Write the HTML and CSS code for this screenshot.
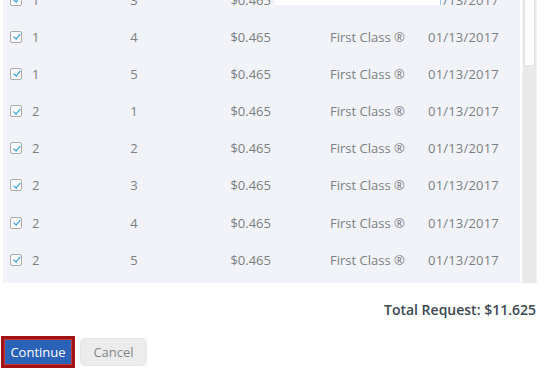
FILE: index.html
```html
<!DOCTYPE html>
<html>
<head>
<meta charset="utf-8">
<link rel="stylesheet" href="styles.css">
</head>
<body>
<div class="page">
  <div class="table-wrap">
    <div class="table">
      <div class="rows">
        <div class="row"><span class="cb"></span><span class="c1">1</span><span class="c2">3</span><span class="c3">$0.465</span><span class="c4">First Class ®</span><span class="c5">01/13/2017</span></div>
        <div class="row"><span class="cb"></span><span class="c1">1</span><span class="c2">4</span><span class="c3">$0.465</span><span class="c4">First Class ®</span><span class="c5">01/13/2017</span></div>
        <div class="row"><span class="cb"></span><span class="c1">1</span><span class="c2">5</span><span class="c3">$0.465</span><span class="c4">First Class ®</span><span class="c5">01/13/2017</span></div>
        <div class="row"><span class="cb"></span><span class="c1">2</span><span class="c2">1</span><span class="c3">$0.465</span><span class="c4">First Class ®</span><span class="c5">01/13/2017</span></div>
        <div class="row"><span class="cb"></span><span class="c1">2</span><span class="c2">2</span><span class="c3">$0.465</span><span class="c4">First Class ®</span><span class="c5">01/13/2017</span></div>
        <div class="row"><span class="cb"></span><span class="c1">2</span><span class="c2">3</span><span class="c3">$0.465</span><span class="c4">First Class ®</span><span class="c5">01/13/2017</span></div>
        <div class="row"><span class="cb"></span><span class="c1">2</span><span class="c2">4</span><span class="c3">$0.465</span><span class="c4">First Class ®</span><span class="c5">01/13/2017</span></div>
        <div class="row"><span class="cb"></span><span class="c1">2</span><span class="c2">5</span><span class="c3">$0.465</span><span class="c4">First Class ®</span><span class="c5">01/13/2017</span></div>
      </div>
      <div class="overlay"></div>
    </div>
    <div class="scrollbar"><div class="thumb"></div></div>
  </div>
  <div class="total">Total Request: $11.625</div>
  <div class="actions">
    <button class="btn btn-primary">Continue</button>
    <button class="btn btn-cancel">Cancel</button>
  </div>
</div>
</body>
</html>
```
FILE: styles.css
```css
html, body {
  margin: 0;
  padding: 0;
  background: #ffffff;
}
body {
  font-family: "Open Sans", "Liberation Sans", sans-serif;
  width: 555px;
  height: 384px;
  overflow: hidden;
}
.page {
  display: flex;
  flex-direction: column;
}
.table-wrap {
  display: flex;
  height: 283px;
  padding-left: 3px;
  gap: 2px;
}
.table {
  position: relative;
  width: 517px;
  background: #f1f3f8;
  overflow: hidden;
}
.rows {
  margin-top: -19px;
}
.row {
  display: grid;
  grid-template-columns: 12px 100px 24px 125px 157px 1fr;
  align-items: center;
  height: 37.17px;
  padding-left: 7px;
  font-size: 13px;
  color: #7b7f84;
}
.c5 { letter-spacing: 0.2px; }
.cb {
  width: 12px;
  height: 12px;
  box-sizing: border-box;
  border: 1px solid #a9adb2;
  border-radius: 2px;
  background: #fbfbfb;
  position: relative;
}
.cb::after {
  content: "";
  position: absolute;
  left: 3.5px;
  top: 0.5px;
  width: 2.5px;
  height: 6px;
  border-right: 1.8px solid #2a9be0;
  border-bottom: 1.8px solid #2a9be0;
  transform: rotate(40deg);
}
.c1 { padding-left: 10px; }
.c2 { text-align: center; }
.c3 { text-align: right; padding-right: 0; }
.c4 { padding-left: 59px; }
.overlay {
  position: absolute;
  left: 272px;
  top: 0;
  width: 165px;
  height: 5px;
  background: #ffffff;
}
.scrollbar {
  width: 15px;
  height: 283px;
  background: #e9e9e9;
  box-sizing: border-box;
  border-left: 1px solid #f1f1f1;
  border-right: 1px solid #f1f1f1;
  padding: 0 1px;
}
.thumb {
  height: 66px;
  background: #ffffff;
  border: 1px solid #e3e3e3;
  border-top: none;
  box-sizing: border-box;
}
.total {
  text-align: right;
  padding-right: 19px;
  margin-top: 18px;
  font-size: 14px;
  font-weight: 600;
  color: #3c4752;
  line-height: 18px;
}
.actions {
  display: flex;
  align-items: center;
  gap: 5px;
  margin-top: 17px;
  padding-left: 1px;
}
.btn {
  font-family: "Open Sans", "Liberation Sans", sans-serif;
  font-size: 13px;
  cursor: pointer;
}
.btn-primary {
  height: 32px;
  width: 74px;
  background: #2a62b7;
  color: #ffffff;
  border: 3px solid #a11214;
  box-shadow: inset 0 0 0 1px #c43a3a;
  padding: 0;
}
.btn-cancel {
  height: 28px;
  width: 67px;
  background: #ececec;
  color: #83878b;
  border: 1px solid #e6e6e6;
  border-radius: 5px;
  padding: 0;
}
```
